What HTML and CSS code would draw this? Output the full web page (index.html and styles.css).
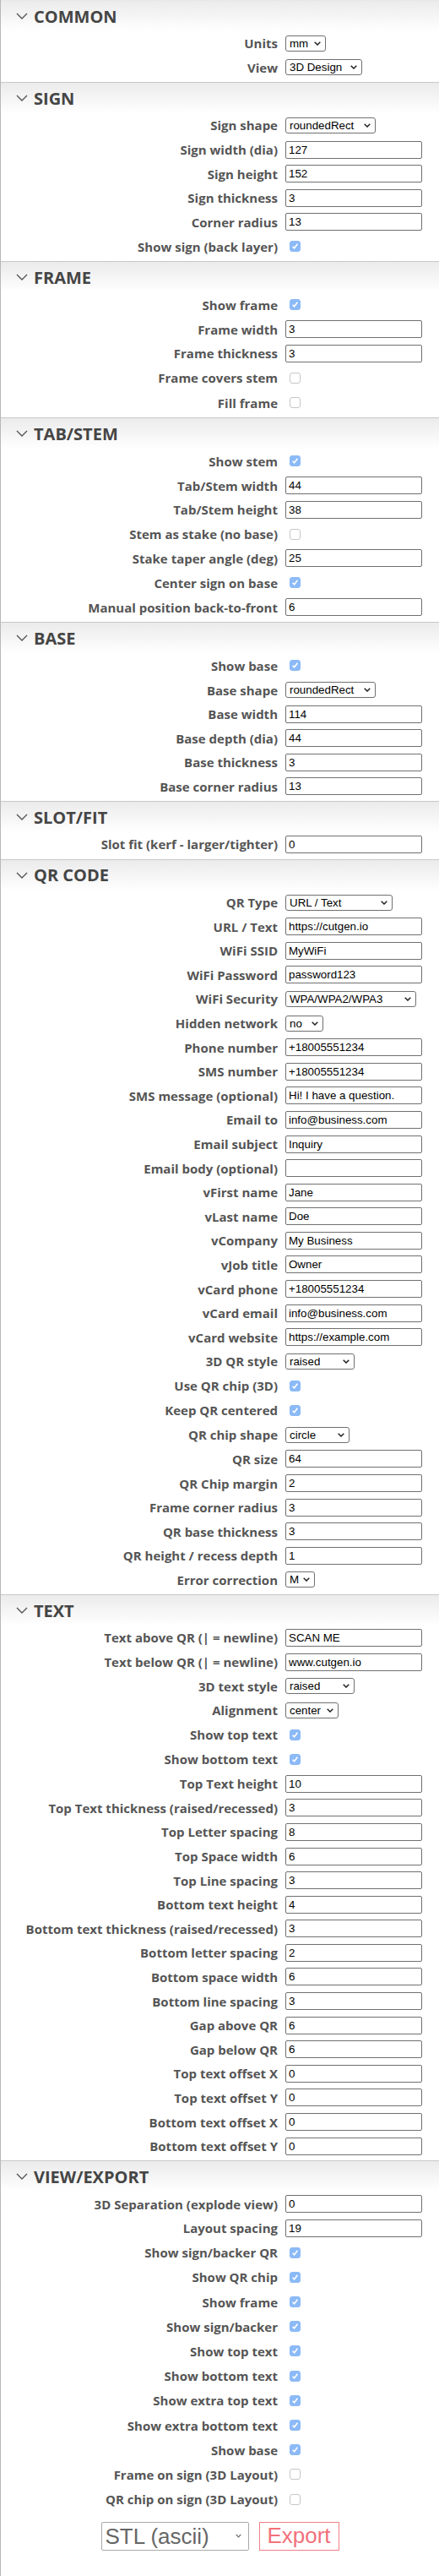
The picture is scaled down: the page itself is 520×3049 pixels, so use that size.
FILE: index.html
```html
<!DOCTYPE html>
<html lang="en">
<head>
  <meta charset="UTF-8" />
  <meta name="viewport" content="width=device-width, initial-scale=1.0"/>
  <title>QR Sign Generator</title>
  <link rel="stylesheet" href="styles.css">
</head>
<body>
  <div id="panel">

    <section class="group">
      <h2 class="group-head"><svg class="chev" viewBox="0 0 14 8"><path d="M1 1 L7 7 L13 1"/></svg>COMMON</h2>
      <div class="group-body">
        <label class="row"><span class="lbl">Units</span><select class="sel-units"><option>mm</option><option>in</option></select></label>
        <label class="row"><span class="lbl">View</span><select class="sel-view"><option>3D Design</option><option>2D Layout</option></select></label>
      </div>
    </section>

    <section class="group">
      <h2 class="group-head"><svg class="chev" viewBox="0 0 14 8"><path d="M1 1 L7 7 L13 1"/></svg>SIGN</h2>
      <div class="group-body">
        <label class="row"><span class="lbl">Sign shape</span><select class="sel-shape"><option>roundedRect</option><option>rect</option><option>circle</option></select></label>
        <label class="row"><span class="lbl">Sign width (dia)</span><input type="text" value="127"></label>
        <label class="row"><span class="lbl">Sign height</span><input type="text" value="152"></label>
        <label class="row"><span class="lbl">Sign thickness</span><input type="text" value="3"></label>
        <label class="row"><span class="lbl">Corner radius</span><input type="text" value="13"></label>
        <label class="row chk"><span class="lbl">Show sign (back layer)</span><input type="checkbox" checked></label>
      </div>
    </section>

    <section class="group">
      <h2 class="group-head"><svg class="chev" viewBox="0 0 14 8"><path d="M1 1 L7 7 L13 1"/></svg>FRAME</h2>
      <div class="group-body">
        <label class="row chk"><span class="lbl">Show frame</span><input type="checkbox" checked></label>
        <label class="row"><span class="lbl">Frame width</span><input type="text" value="3"></label>
        <label class="row"><span class="lbl">Frame thickness</span><input type="text" value="3"></label>
        <label class="row chk"><span class="lbl">Frame covers stem</span><input type="checkbox"></label>
        <label class="row chk"><span class="lbl">Fill frame</span><input type="checkbox"></label>
      </div>
    </section>

    <section class="group">
      <h2 class="group-head"><svg class="chev" viewBox="0 0 14 8"><path d="M1 1 L7 7 L13 1"/></svg>TAB/STEM</h2>
      <div class="group-body">
        <label class="row chk"><span class="lbl">Show stem</span><input type="checkbox" checked></label>
        <label class="row"><span class="lbl">Tab/Stem width</span><input type="text" value="44"></label>
        <label class="row"><span class="lbl">Tab/Stem height</span><input type="text" value="38"></label>
        <label class="row chk"><span class="lbl">Stem as stake (no base)</span><input type="checkbox"></label>
        <label class="row"><span class="lbl">Stake taper angle (deg)</span><input type="text" value="25"></label>
        <label class="row chk"><span class="lbl">Center sign on base</span><input type="checkbox" checked></label>
        <label class="row"><span class="lbl">Manual position back-to-front</span><input type="text" value="6"></label>
      </div>
    </section>

    <section class="group">
      <h2 class="group-head"><svg class="chev" viewBox="0 0 14 8"><path d="M1 1 L7 7 L13 1"/></svg>BASE</h2>
      <div class="group-body">
        <label class="row chk"><span class="lbl">Show base</span><input type="checkbox" checked></label>
        <label class="row"><span class="lbl">Base shape</span><select class="sel-shape"><option>roundedRect</option><option>rect</option><option>circle</option></select></label>
        <label class="row"><span class="lbl">Base width</span><input type="text" value="114"></label>
        <label class="row"><span class="lbl">Base depth (dia)</span><input type="text" value="44"></label>
        <label class="row"><span class="lbl">Base thickness</span><input type="text" value="3"></label>
        <label class="row"><span class="lbl">Base corner radius</span><input type="text" value="13"></label>
      </div>
    </section>

    <section class="group">
      <h2 class="group-head"><svg class="chev" viewBox="0 0 14 8"><path d="M1 1 L7 7 L13 1"/></svg>SLOT/FIT</h2>
      <div class="group-body">
        <label class="row"><span class="lbl">Slot fit (kerf - larger/tighter)</span><input type="text" value="0"></label>
      </div>
    </section>

    <section class="group">
      <h2 class="group-head"><svg class="chev" viewBox="0 0 14 8"><path d="M1 1 L7 7 L13 1"/></svg>QR CODE</h2>
      <div class="group-body">
        <label class="row"><span class="lbl">QR Type</span><select class="sel-qrtype"><option>URL / Text</option><option>WiFi</option><option>Phone</option><option>SMS</option><option>Email</option><option>vCard contact</option></select></label>
        <label class="row"><span class="lbl">URL / Text</span><input type="text" value="https://cutgen.io"></label>
        <label class="row"><span class="lbl">WiFi SSID</span><input type="text" value="MyWiFi"></label>
        <label class="row"><span class="lbl">WiFi Password</span><input type="text" value="password123"></label>
        <label class="row"><span class="lbl">WiFi Security</span><select class="sel-sec"><option>WPA/WPA2/WPA3</option><option>WEP</option><option>None</option></select></label>
        <label class="row"><span class="lbl">Hidden network</span><select class="sel-yn"><option>no</option><option>yes</option></select></label>
        <label class="row"><span class="lbl">Phone number</span><input type="text" value="+18005551234"></label>
        <label class="row"><span class="lbl">SMS number</span><input type="text" value="+18005551234"></label>
        <label class="row"><span class="lbl">SMS message (optional)</span><input type="text" value="Hi! I have a question."></label>
        <label class="row"><span class="lbl">Email to</span><input type="text" value="info@business.com"></label>
        <label class="row"><span class="lbl">Email subject</span><input type="text" value="Inquiry"></label>
        <label class="row"><span class="lbl">Email body (optional)</span><input type="text" value=""></label>
        <label class="row"><span class="lbl">vFirst name</span><input type="text" value="Jane"></label>
        <label class="row"><span class="lbl">vLast name</span><input type="text" value="Doe"></label>
        <label class="row"><span class="lbl">vCompany</span><input type="text" value="My Business"></label>
        <label class="row"><span class="lbl">vJob title</span><input type="text" value="Owner"></label>
        <label class="row"><span class="lbl">vCard phone</span><input type="text" value="+18005551234"></label>
        <label class="row"><span class="lbl">vCard email</span><input type="text" value="info@business.com"></label>
        <label class="row"><span class="lbl">vCard website</span><input type="text" value="https://example.com"></label>
        <label class="row"><span class="lbl">3D QR style</span><select class="sel-style"><option>raised</option><option>recessed</option></select></label>
        <label class="row chk"><span class="lbl">Use QR chip (3D)</span><input type="checkbox" checked></label>
        <label class="row chk"><span class="lbl">Keep QR centered</span><input type="checkbox" checked></label>
        <label class="row"><span class="lbl">QR chip shape</span><select class="sel-chip"><option>circle</option><option>square</option></select></label>
        <label class="row"><span class="lbl">QR size</span><input type="text" value="64"></label>
        <label class="row"><span class="lbl">QR Chip margin</span><input type="text" value="2"></label>
        <label class="row"><span class="lbl">Frame corner radius</span><input type="text" value="3"></label>
        <label class="row"><span class="lbl">QR base thickness</span><input type="text" value="3"></label>
        <label class="row"><span class="lbl">QR height / recess depth</span><input type="text" value="1"></label>
        <label class="row"><span class="lbl">Error correction</span><select class="sel-ec"><option>M</option><option>L</option><option>Q</option><option>H</option></select></label>
      </div>
    </section>

    <section class="group">
      <h2 class="group-head"><svg class="chev" viewBox="0 0 14 8"><path d="M1 1 L7 7 L13 1"/></svg>TEXT</h2>
      <div class="group-body">
        <label class="row"><span class="lbl">Text above QR (| = newline)</span><input type="text" value="SCAN ME"></label>
        <label class="row"><span class="lbl">Text below QR (| = newline)</span><input type="text" value="www.cutgen.io"></label>
        <label class="row"><span class="lbl">3D text style</span><select class="sel-style"><option>raised</option><option>recessed</option></select></label>
        <label class="row"><span class="lbl">Alignment</span><select class="sel-align"><option>center</option><option>left</option><option>right</option></select></label>
        <label class="row chk"><span class="lbl">Show top text</span><input type="checkbox" checked></label>
        <label class="row chk"><span class="lbl">Show bottom text</span><input type="checkbox" checked></label>
        <label class="row"><span class="lbl">Top Text height</span><input type="text" value="10"></label>
        <label class="row"><span class="lbl">Top Text thickness (raised/recessed)</span><input type="text" value="3"></label>
        <label class="row"><span class="lbl">Top Letter spacing</span><input type="text" value="8"></label>
        <label class="row"><span class="lbl">Top Space width</span><input type="text" value="6"></label>
        <label class="row"><span class="lbl">Top Line spacing</span><input type="text" value="3"></label>
        <label class="row"><span class="lbl">Bottom text height</span><input type="text" value="4"></label>
        <label class="row"><span class="lbl">Bottom text thickness (raised/recessed)</span><input type="text" value="3"></label>
        <label class="row"><span class="lbl">Bottom letter spacing</span><input type="text" value="2"></label>
        <label class="row"><span class="lbl">Bottom space width</span><input type="text" value="6"></label>
        <label class="row"><span class="lbl">Bottom line spacing</span><input type="text" value="3"></label>
        <label class="row"><span class="lbl">Gap above QR</span><input type="text" value="6"></label>
        <label class="row"><span class="lbl">Gap below QR</span><input type="text" value="6"></label>
        <label class="row"><span class="lbl">Top text offset X</span><input type="text" value="0"></label>
        <label class="row"><span class="lbl">Top text offset Y</span><input type="text" value="0"></label>
        <label class="row"><span class="lbl">Bottom text offset X</span><input type="text" value="0"></label>
        <label class="row"><span class="lbl">Bottom text offset Y</span><input type="text" value="0"></label>
      </div>
    </section>

    <section class="group">
      <h2 class="group-head"><svg class="chev" viewBox="0 0 14 8"><path d="M1 1 L7 7 L13 1"/></svg>VIEW/EXPORT</h2>
      <div class="group-body">
        <label class="row"><span class="lbl">3D Separation (explode view)</span><input type="text" value="0"></label>
        <label class="row"><span class="lbl">Layout spacing</span><input type="text" value="19"></label>
        <label class="row chk"><span class="lbl">Show sign/backer QR</span><input type="checkbox" checked></label>
        <label class="row chk"><span class="lbl">Show QR chip</span><input type="checkbox" checked></label>
        <label class="row chk"><span class="lbl">Show frame</span><input type="checkbox" checked></label>
        <label class="row chk"><span class="lbl">Show sign/backer</span><input type="checkbox" checked></label>
        <label class="row chk"><span class="lbl">Show top text</span><input type="checkbox" checked></label>
        <label class="row chk"><span class="lbl">Show bottom text</span><input type="checkbox" checked></label>
        <label class="row chk"><span class="lbl">Show extra top text</span><input type="checkbox" checked></label>
        <label class="row chk"><span class="lbl">Show extra bottom text</span><input type="checkbox" checked></label>
        <label class="row chk"><span class="lbl">Show base</span><input type="checkbox" checked></label>
        <label class="row chk"><span class="lbl">Frame on sign (3D Layout)</span><input type="checkbox"></label>
        <label class="row chk"><span class="lbl">QR chip on sign (3D Layout)</span><input type="checkbox"></label>

        <div class="export-row">
          <select id="exportFormat"><option>STL (ascii)</option><option>STL (binary)</option><option>3MF</option></select>
          <button id="exportBtn">Export</button>
        </div>
      </div>
    </section>

  </div>
</body>
</html>
```

FILE: styles.css
```css
* {
  box-sizing: border-box;
}

body {
  margin: 0;
  padding: 0;
  background: white;
  font-family: 'Open Sans', sans-serif;
}

#panel {
  border-left: 1px solid #b8b8b8;
  min-height: 3049px;
}

.group {
  border-top: 1px solid #c8c8c8;
}

.group:first-child {
  border-top-color: #e6e6e6;
}

.group-head {
  margin: 0;
  height: 36px;
  display: flex;
  align-items: center;
  padding-left: 18px;
  font-size: 20px;
  font-weight: 700;
  color: #454545;
  background: linear-gradient(#ebebeb, #ffffff);
}

.chev {
  width: 14px;
  height: 8px;
  margin-right: 7px;
  fill: none;
  stroke: #555;
  stroke-width: 1.4;
}

.group-body {
  padding-bottom: 3px;
}

.row {
  display: grid;
  grid-template-columns: 1fr 162px;
  column-gap: 9px;
  align-items: center;
  justify-items: start;
  height: 28.6px;
  padding-right: 20px;
}

.row.chk {
  height: 29.2px;
}

.lbl {
  justify-self: end;
  font-size: 15px;
  font-weight: 700;
  color: #555;
  white-space: nowrap;
}

input[type="text"] {
  width: 162px;
  height: 21px;
  margin: 0;
  padding: 0 3px;
  border: 1px solid #707070;
  border-radius: 2px;
  font-family: 'Liberation Sans', Arial, sans-serif;
  font-size: 13.33px;
  color: black;
  background: white;
}

select {
  appearance: none;
  -webkit-appearance: none;
  height: 19px;
  margin: 0;
  padding: 0 14px 0 4px;
  border: 1px solid #707070;
  border-radius: 3px;
  font-family: 'Liberation Sans', Arial, sans-serif;
  font-size: 13.33px;
  color: black;
  background: white url("data:image/svg+xml,%3Csvg xmlns='http://www.w3.org/2000/svg' width='8' height='5' viewBox='0 0 8 5'%3E%3Cpath d='M0.7 0.7 L4 4 L7.3 0.7' fill='none' stroke='%23222' stroke-width='1.5'/%3E%3C/svg%3E") no-repeat right 5px center;
}

/* select widths follow their longest option */
.sel-units { width: 48px; }
.sel-view { width: 91px; }
.sel-shape { width: 107px; }
.sel-qrtype { width: 127px; }
.sel-sec { width: 155px; }
.sel-yn { width: 45px; }
.sel-style { width: 82px; }
.sel-chip { width: 76px; }
.sel-align { width: 63px; }
.sel-ec { width: 35px; }

input[type="checkbox"] {
  appearance: none;
  -webkit-appearance: none;
  width: 13px;
  height: 13px;
  margin: 0 0 0 5px;
  border: 1px solid #c6c6c6;
  border-radius: 3px;
  background: white;
}

input[type="checkbox"]:checked {
  border-color: #8cbaf7;
  background: #8cbaf7 url("data:image/svg+xml,%3Csvg xmlns='http://www.w3.org/2000/svg' width='11' height='11' viewBox='0 0 11 11'%3E%3Cpath d='M2.6 5.8 L4.6 7.8 L8.4 2.8' fill='none' stroke='white' stroke-width='1.6'/%3E%3C/svg%3E") no-repeat center;
}

.export-row {
  display: flex;
  justify-content: center;
  gap: 12px;
  padding: 12px 0 0 0;
}

#exportFormat {
  width: 175px;
  height: 34px;
  padding: 0 20px 0 4px;
  border: 1px solid #a8a8a8;
  border-radius: 2px;
  font-size: 26px;
  color: #666;
  background: white url("data:image/svg+xml,%3Csvg xmlns='http://www.w3.org/2000/svg' width='7' height='5' viewBox='0 0 7 5'%3E%3Cpath d='M0.7 0.8 L3.5 3.8 L6.3 0.8' fill='none' stroke='%23666' stroke-width='1.2'/%3E%3C/svg%3E") no-repeat right 8px center;
}

#exportBtn {
  width: 95px;
  height: 34px;
  padding: 0;
  border: 1px solid #f08088;
  border-radius: 0;
  background: white;
  font-family: 'Liberation Sans', Arial, sans-serif;
  font-size: 26px;
  color: #f2707b;
}
```
